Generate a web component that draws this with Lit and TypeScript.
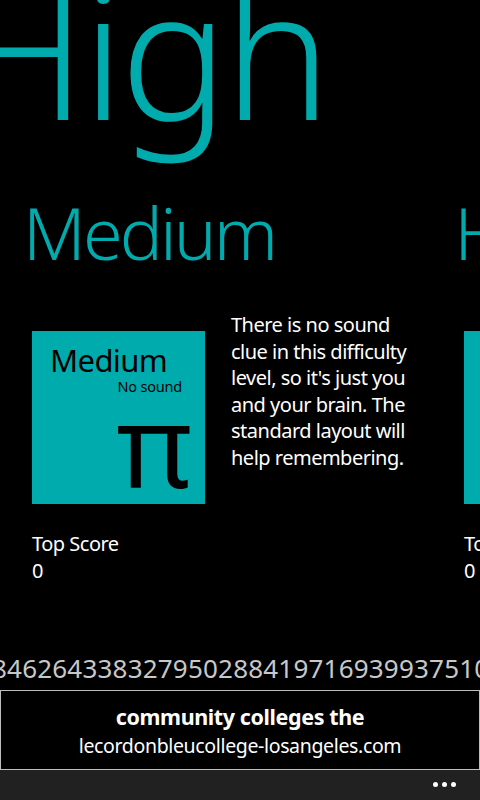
import { LitElement, html, css } from "lit";
import { customElement } from "lit/decorators.js";

@customElement("app-root")
export class AppRoot extends LitElement {
  static styles = css`
    :host {
      display: flex;
      flex-direction: column;
      width: 480px;
      height: 800px;
      overflow: hidden;
      background: #000;
      color: #fff;
      font-family: "Noto Sans", "Open Sans", sans-serif;
    }
    .hero {
      height: 190px;
      flex: none;
      overflow: hidden;
    }
    .hero-text {
      margin: -99px 0 0 -44px;
      font-size: 180px;
      font-weight: 300;
      line-height: 300px;
      color: #00abae;
      letter-spacing: -4px;
      white-space: nowrap;
    }
    .tabs {
      flex: none;
      height: 126px;
      display: flex;
      gap: 179px;
      padding-left: 23px;
      font-size: 72px;
      font-weight: 300;
      line-height: 85px;
      color: #00abae;
      white-space: nowrap;
      letter-spacing: -2.9px;
    }
    .pane-row {
      flex: none;
      height: 320px;
      display: flex;
      gap: 32px;
      padding-left: 32px;
    }
    .pane {
      flex: none;
      width: 400px;
    }
    .top {
      display: flex;
      gap: 26px;
      height: 173px;
      margin-top: 15px;
    }
    .tile {
      flex: none;
      width: 173px;
      height: 173px;
      background: #00abae;
      color: #000;
      display: flex;
      flex-direction: column;
      overflow: hidden;
    }
    .tile-name {
      font-size: 31px;
      line-height: 40px;
      margin: 9px 0 0 18px;
      letter-spacing: -0.6px;
    }
    .tile-sub {
      font-size: 14.5px;
      line-height: 20px;
      margin: -4px 23px 0 0;
      text-align: right;
      letter-spacing: -0.2px;
    }
    .tile-pi {
      font-size: 116px;
      line-height: 110px;
      text-align: right;
      margin: -8px 13px 0 0;
    }
    .desc {
      flex: none;
      width: 190px;
      margin: -19px 0 0 0;
      font-size: 20px;
      line-height: 26.6px;
      letter-spacing: -0.5px;
    }
    .score {
      margin-top: 26px;
      font-size: 20px;
      line-height: 27px;
      letter-spacing: -0.5px;
    }
    .digits {
      flex: none;
      height: 54px;
      white-space: nowrap;
      overflow: hidden;
      font-size: 26px;
      line-height: 64px;
      color: #c8c8c8;
      letter-spacing: 0.2px;
    }
    .digits span {
      display: inline-block;
      margin-left: -8px;
    }
    .ad {
      flex: none;
      height: 80px;
      box-sizing: border-box;
      border: 1px solid #bdbdbd;
      padding-top: 3px;
      text-align: center;
      display: flex;
      flex-direction: column;
      justify-content: center;
    }
    .ad-title {
      font-size: 21.5px;
      font-weight: 700;
      line-height: 28px;
      letter-spacing: -0.4px;
    }
    .ad-url {
      font-size: 19.5px;
      line-height: 29px;
      letter-spacing: -0.35px;
    }
    .bar {
      flex: 1;
      background: #212121;
      display: flex;
      justify-content: flex-end;
      gap: 4px;
      padding: 12px 24px 0 0;
    }
    .dot {
      width: 5px;
      height: 5px;
      border-radius: 50%;
      background: #fff;
    }
  `;

  private pane(name: string, sub: string, glyph: string, desc: string) {
    return html`<div class="pane">
      <div class="top">
        <div class="tile">
          <div class="tile-name">${name}</div>
          <div class="tile-sub">${sub}</div>
          <div class="tile-pi">${glyph}</div>
        </div>
        <div class="desc">${desc}</div>
      </div>
      <div class="score">Top Score<br />0</div>
    </div>`;
  }

  render() {
    return html`
      <div class="hero"><div class="hero-text">High</div></div>
      <div class="tabs"><span>Medium</span><span>High</span></div>
      <div class="pane-row">
        ${this.pane(
          "Medium",
          "No sound",
          "π",
          "There is no sound clue in this difficulty level, so it's just you and your brain. The standard layout will help remembering."
        )}
        ${this.pane("High", "", "", "")}
      </div>
      <div class="digits"><span>846264338327950288419716939937510</span></div>
      <div class="ad">
        <div class="ad-title">community colleges the</div>
        <div class="ad-url">lecordonbleucollege-losangeles.com</div>
      </div>
      <div class="bar">
        <div class="dot"></div>
        <div class="dot"></div>
        <div class="dot"></div>
      </div>
    `;
  }
}
